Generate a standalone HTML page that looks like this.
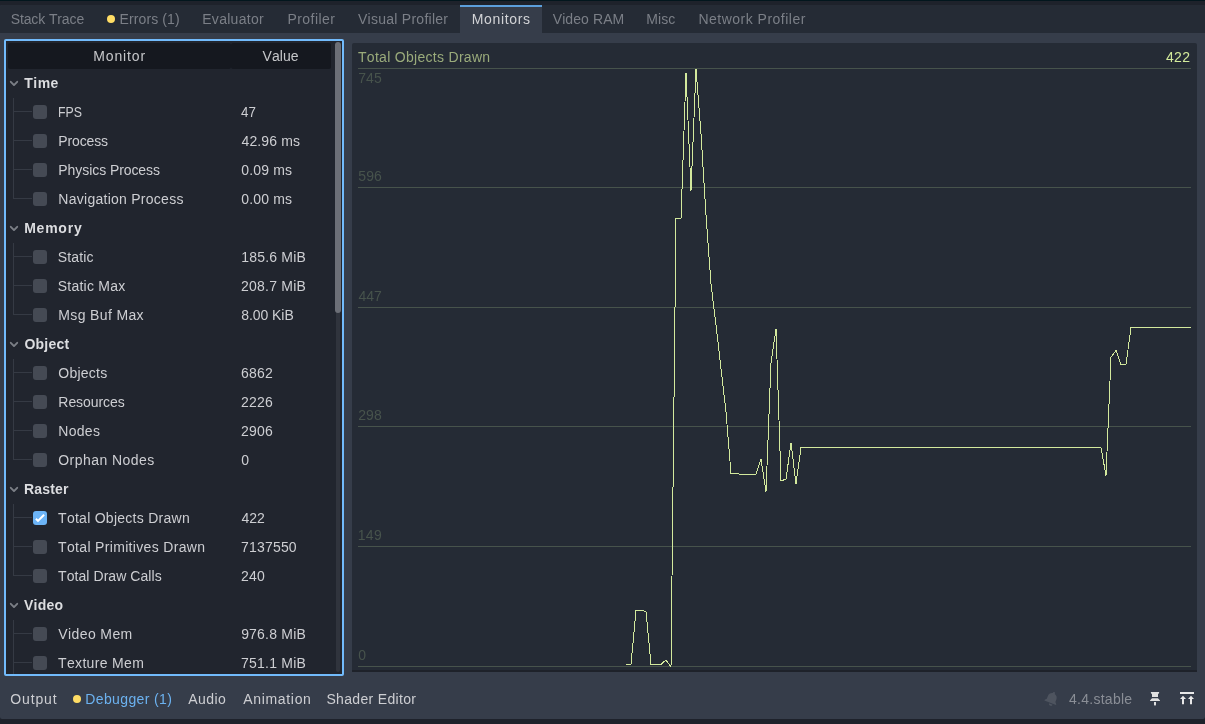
<!DOCTYPE html><html><head><meta charset="utf-8"><title>Godot Debugger - Monitors</title><style>
html,body{margin:0;padding:0}
body{width:1205px;height:724px;overflow:hidden;position:relative;background:#1e222b;font-family:"Liberation Sans",sans-serif;font-size:14px;line-height:16px;font-kerning:none}
div,span,svg{position:absolute;box-sizing:border-box}
.t{white-space:pre;height:16px}
.cb{width:14px;height:14px;left:33px;border-radius:3px;background:#454a54}
.hl{left:13px;width:19px;height:1px;background:#353a44}
.vl{left:13px;width:1px;background:#353a44}

</style></head><body>
<div style="left:0;top:0;width:1205px;height:1px;background:#02161d"></div>
<div style="left:0;top:5px;width:1205px;height:714px;background:#363d4a;border-radius:2px"></div>
<div style="left:0;top:5px;width:1205px;height:28px;background:#252b35;border-radius:2px 2px 0 0"></div>
<div style="left:460px;top:5px;width:82px;height:28px;background:#363d4a;border-top:2px solid #5c9fdc"></div>
<div style="left:107px;top:15px;width:8px;height:8px;border-radius:50%;background:#ffdd65"></div>
<div style="left:4px;top:39px;width:340px;height:637px;background:#21252e;border:2px solid #72bbfc;border-radius:2px"></div>
<div style="left:8px;top:43px;width:223px;height:26px;background:#15181f;border-radius:2px"></div>
<div style="left:231px;top:43px;width:100px;height:26px;background:#15181f;border-radius:2px"></div>
<div style="left:336px;top:42px;width:4px;height:630px;background:#30343d;border-radius:2px"></div>
<div style="left:335px;top:42px;width:6px;height:271px;background:#6c6f77;border-radius:3px"></div>
<svg style="left:8px;top:69px" width="14" height="29" viewBox="0 0 14 29"><path d="M2.8 12.8 L6 16.1 L9.2 12.8" fill="none" stroke="#7b7f86" stroke-width="1.9" stroke-linecap="round" stroke-linejoin="round"/></svg>
<div class="hl" style="top:111px"></div>
<div class="cb" style="top:105px"></div>
<div class="hl" style="top:140px"></div>
<div class="cb" style="top:134px"></div>
<div class="hl" style="top:169px"></div>
<div class="cb" style="top:163px"></div>
<div class="hl" style="top:198px"></div>
<div class="cb" style="top:192px"></div>
<div class="vl" style="top:98px;height:101px"></div>
<svg style="left:8px;top:214px" width="14" height="29" viewBox="0 0 14 29"><path d="M2.8 12.8 L6 16.1 L9.2 12.8" fill="none" stroke="#7b7f86" stroke-width="1.9" stroke-linecap="round" stroke-linejoin="round"/></svg>
<div class="hl" style="top:256px"></div>
<div class="cb" style="top:250px"></div>
<div class="hl" style="top:285px"></div>
<div class="cb" style="top:279px"></div>
<div class="hl" style="top:314px"></div>
<div class="cb" style="top:308px"></div>
<div class="vl" style="top:243px;height:72px"></div>
<svg style="left:8px;top:330px" width="14" height="29" viewBox="0 0 14 29"><path d="M2.8 12.8 L6 16.1 L9.2 12.8" fill="none" stroke="#7b7f86" stroke-width="1.9" stroke-linecap="round" stroke-linejoin="round"/></svg>
<div class="hl" style="top:372px"></div>
<div class="cb" style="top:366px"></div>
<div class="hl" style="top:401px"></div>
<div class="cb" style="top:395px"></div>
<div class="hl" style="top:430px"></div>
<div class="cb" style="top:424px"></div>
<div class="hl" style="top:459px"></div>
<div class="cb" style="top:453px"></div>
<div class="vl" style="top:359px;height:101px"></div>
<svg style="left:8px;top:475px" width="14" height="29" viewBox="0 0 14 29"><path d="M2.8 12.8 L6 16.1 L9.2 12.8" fill="none" stroke="#7b7f86" stroke-width="1.9" stroke-linecap="round" stroke-linejoin="round"/></svg>
<div class="hl" style="top:517px"></div>
<div class="cb" style="top:511px;background:#6cb4f6"></div>
<svg style="left:33px;top:511px" width="14" height="14" viewBox="0 0 14 14"><path d="M2.9 7.8 L5.0 9.9 L11.1 3.8" fill="none" stroke="#fff" stroke-width="2" stroke-linecap="butt" stroke-linejoin="miter"/></svg>
<div class="hl" style="top:546px"></div>
<div class="cb" style="top:540px"></div>
<div class="hl" style="top:575px"></div>
<div class="cb" style="top:569px"></div>
<div class="vl" style="top:504px;height:72px"></div>
<svg style="left:8px;top:591px" width="14" height="29" viewBox="0 0 14 29"><path d="M2.8 12.8 L6 16.1 L9.2 12.8" fill="none" stroke="#7b7f86" stroke-width="1.9" stroke-linecap="round" stroke-linejoin="round"/></svg>
<div class="hl" style="top:633px"></div>
<div class="cb" style="top:627px"></div>
<div class="hl" style="top:662px"></div>
<div class="cb" style="top:656px"></div>
<div class="vl" style="top:620px;height:54px"></div>
<div style="left:352px;top:43px;width:845px;height:629px;background:#252b35;border-bottom:2px solid #1e222a;border-radius:2px 2px 0 0"></div>
<div style="left:358px;top:68px;width:833px;height:1px;background:#47534c"></div>
<div style="left:358px;top:187px;width:833px;height:1px;background:#47534c"></div>
<div style="left:358px;top:307px;width:833px;height:1px;background:#47534c"></div>
<div style="left:358px;top:426px;width:833px;height:1px;background:#47534c"></div>
<div style="left:358px;top:546px;width:833px;height:1px;background:#47534c"></div>
<div style="left:358px;top:666px;width:833px;height:1px;background:#47534c"></div>
<svg style="left:0;top:0" width="1205" height="724" viewBox="0 0 1205 724" shape-rendering="crispEdges"><polyline fill="none" stroke="#d3e99d" stroke-width="1" stroke-linejoin="miter" points="626,664.3 631,664.3 636,610.4 641,610.4 646,611.5 651,664.3 656,664.3 661,664.3 666,660 671,666.9 676,218.7 681,218.7 686,73 691,190.9 696,69 701,134 706,215 711,284 716,325 721,368.5 726,412 731,473.5 736,473.5 741,474.4 746,474.4 751,474.4 756,474.4 761,459 766,491.7 771,363 776,329 781,481 786,479 791,443 796,483.7 801,447.5 1101,447.5 1106,475.7 1111,357 1116,350.5 1121,364.4 1126,364.4 1131,327.5 1191,327.5"/></svg>
<div style="left:73px;top:695px;width:8px;height:8px;border-radius:50%;background:#ffdd65"></div>
<svg style="left:1043px;top:690px" width="16" height="16" viewBox="0 0 16 16"><g transform="translate(9 8) rotate(21)" fill="#4e545f"><path d="M0 -6.300c-.7 0-1.100.5-1.100 1.100v.4C-3.400-4.100-4.600-2.400-4.600-.2V2.600L-6.200 4.200V5H6.200V4.200L4.600 2.600V-.2C4.600-2.400 3.400-4.100 1.100-4.800v-.4C1.100-5.800.7-6.300 0-6.300z"/><path d="M-.700 6a1.800 1.800 0 0 0 3.600 0z"/></g></svg>
<svg style="left:1147px;top:690px" width="16" height="16" viewBox="0 0 16 16"><path fill="#e0e0e0" d="M3.900 2H12.100V3L11 4.200V7H5V4.200L3.900 3Z M5 8.200H11L13 10.500V11.100H3V10.500Z M7 12H9V14.700L8 16L7 14.700Z"/></svg>
<svg style="left:1179px;top:690px" width="16" height="16" viewBox="0 0 16 16"><path fill="#e8e8e8" d="M1 2H15V4H1Z M4 5.800L7 9H5V14.200H3V9H1Z M12 5.800L15 9H13V14.200H11V9H9Z"/></svg>
<div style="left:0;top:0;width:1205px;height:724px;will-change:transform">
<span class="t" style="left:24.34px;top:75px;color:#dcdde0;font-weight:700;letter-spacing:0.453px;">Time</span>
<span class="t" style="left:57.89px;top:104px;color:#cdced2;transform-origin:0 0;transform:scaleX(0.8806);">FPS</span>
<span class="t" style="left:241.49px;top:104px;color:#cdced2;transform-origin:0 0;transform:scaleX(0.9555);">47</span>
<span class="t" style="left:58.35px;top:133px;color:#cdced2;letter-spacing:-0.153px;">Process</span>
<span class="t" style="left:241.48px;top:133px;color:#cdced2;letter-spacing:0.134px;">42.96 ms</span>
<span class="t" style="left:58.35px;top:162px;color:#cdced2;letter-spacing:-0.074px;">Physics Process</span>
<span class="t" style="left:241.25px;top:162px;color:#cdced2;letter-spacing:0.159px;">0.09 ms</span>
<span class="t" style="left:58.35px;top:191px;color:#cdced2;letter-spacing:0.261px;">Navigation Process</span>
<span class="t" style="left:241.25px;top:191px;color:#cdced2;letter-spacing:0.159px;">0.00 ms</span>
<span class="t" style="left:24.16px;top:220px;color:#dcdde0;font-weight:700;letter-spacing:0.766px;">Memory</span>
<span class="t" style="left:57.76px;top:249px;color:#cdced2;letter-spacing:0.158px;">Static</span>
<span class="t" style="left:241.23px;top:249px;color:#cdced2;letter-spacing:0.196px;">185.6 MiB</span>
<span class="t" style="left:57.76px;top:278px;color:#cdced2;letter-spacing:0.237px;">Static Max</span>
<span class="t" style="left:241.10px;top:278px;color:#cdced2;letter-spacing:0.214px;">208.7 MiB</span>
<span class="t" style="left:58.35px;top:307px;color:#cdced2;letter-spacing:0.351px;">Msg Buf Max</span>
<span class="t" style="left:241.19px;top:307px;color:#cdced2;letter-spacing:-0.054px;">8.00 KiB</span>
<span class="t" style="left:24.43px;top:336px;color:#dcdde0;font-weight:700;letter-spacing:0.216px;">Object</span>
<span class="t" style="left:58.24px;top:365px;color:#cdced2;letter-spacing:0.251px;">Objects</span>
<span class="t" style="left:241.09px;top:365px;color:#cdced2;letter-spacing:0.190px;">6862</span>
<span class="t" style="left:58.35px;top:394px;color:#cdced2;letter-spacing:-0.070px;">Resources</span>
<span class="t" style="left:241.10px;top:394px;color:#cdced2;letter-spacing:0.158px;">2226</span>
<span class="t" style="left:58.35px;top:423px;color:#cdced2;letter-spacing:0.271px;">Nodes</span>
<span class="t" style="left:241.10px;top:423px;color:#cdced2;letter-spacing:0.158px;">2906</span>
<span class="t" style="left:58.24px;top:452px;color:#cdced2;letter-spacing:0.456px;">Orphan Nodes</span>
<span class="t" style="left:241.25px;top:452px;color:#cdced2;">0</span>
<span class="t" style="left:24.06px;top:481px;color:#dcdde0;font-weight:700;letter-spacing:0.174px;">Raster</span>
<span class="t" style="left:58.09px;top:510px;color:#cdced2;letter-spacing:0.267px;">Total Objects Drawn</span>
<span class="t" style="left:241.48px;top:510px;color:#cdced2;letter-spacing:0.033px;">422</span>
<span class="t" style="left:58.09px;top:539px;color:#cdced2;letter-spacing:0.328px;">Total Primitives Drawn</span>
<span class="t" style="left:241.08px;top:539px;color:#cdced2;letter-spacing:0.177px;">7137550</span>
<span class="t" style="left:58.09px;top:568px;color:#cdced2;letter-spacing:0.062px;">Total Draw Calls</span>
<span class="t" style="left:241.10px;top:568px;color:#cdced2;letter-spacing:0.146px;">240</span>
<span class="t" style="left:24.00px;top:597px;color:#dcdde0;font-weight:700;letter-spacing:0.256px;">Video</span>
<span class="t" style="left:58.34px;top:626px;color:#cdced2;letter-spacing:0.385px;">Video Mem</span>
<span class="t" style="left:241.14px;top:626px;color:#cdced2;letter-spacing:0.208px;">976.8 MiB</span>
<span class="t" style="left:58.09px;top:655px;color:#cdced2;letter-spacing:0.328px;">Texture Mem</span>
<span class="t" style="left:241.08px;top:655px;color:#cdced2;letter-spacing:0.215px;">751.1 MiB</span>
<span class="t" style="left:10.66px;top:11px;color:#7b7f87;letter-spacing:-0.113px;">Stack Trace</span>
<span class="t" style="left:119.45px;top:11px;color:#7b7f87;letter-spacing:0.123px;">Errors (1)</span>
<span class="t" style="left:202.25px;top:11px;color:#7b7f87;letter-spacing:0.280px;">Evaluator</span>
<span class="t" style="left:287.45px;top:11px;color:#7b7f87;letter-spacing:0.448px;">Profiler</span>
<span class="t" style="left:357.94px;top:11px;color:#7b7f87;letter-spacing:0.266px;">Visual Profiler</span>
<span class="t" style="left:471.65px;top:11px;color:#d2d3d6;letter-spacing:0.667px;">Monitors</span>
<span class="t" style="left:552.74px;top:11px;color:#7b7f87;letter-spacing:0.088px;">Video RAM</span>
<span class="t" style="left:646.35px;top:11px;color:#7b7f87;letter-spacing:0.082px;">Misc</span>
<span class="t" style="left:698.45px;top:11px;color:#7b7f87;letter-spacing:0.487px;">Network Profiler</span>
<span class="t" style="left:93.15px;top:48px;color:#c6c7ca;letter-spacing:0.900px;">Monitor</span>
<span class="t" style="left:262.54px;top:48px;color:#c6c7ca;letter-spacing:0.044px;">Value</span>
<span class="t" style="left:10.34px;top:691px;color:#cdced2;letter-spacing:0.848px;">Output</span>
<span class="t" style="left:85.25px;top:691px;color:#6cb2f0;letter-spacing:0.375px;">Debugger (1)</span>
<span class="t" style="left:188.17px;top:691px;color:#cdced2;letter-spacing:0.452px;">Audio</span>
<span class="t" style="left:243.17px;top:691px;color:#cdced2;letter-spacing:0.685px;">Animation</span>
<span class="t" style="left:326.46px;top:691px;color:#cdced2;letter-spacing:0.322px;">Shader Editor</span>
<span class="t" style="left:1069.08px;top:691px;color:#8a8e96;letter-spacing:0.259px;">4.4.stable</span>
<span class="t" style="left:357.99px;top:49px;color:#9aab7b;letter-spacing:0.295px;">Total Objects Drawn</span>
<span class="t" style="left:1165.88px;top:49px;color:#d3ea9b;letter-spacing:0.383px;">422</span>
<span class="t" style="left:358.18px;top:70px;color:#47534c;letter-spacing:0.124px;">745</span>
<span class="t" style="left:358.34px;top:168px;color:#47534c;letter-spacing:0.059px;">596</span>
<span class="t" style="left:358.58px;top:288px;color:#47534c;letter-spacing:-0.017px;">447</span>
<span class="t" style="left:358.20px;top:407px;color:#47534c;letter-spacing:0.127px;">298</span>
<span class="t" style="left:357.63px;top:527px;color:#47534c;letter-spacing:0.436px;">149</span>
<span class="t" style="left:358.35px;top:647px;color:#47534c;">0</span>
</div>
</body></html>
